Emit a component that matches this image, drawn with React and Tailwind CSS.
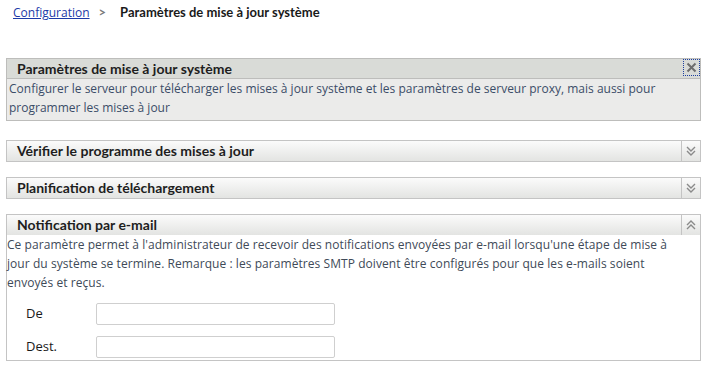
import React from "react";

const BODY = { fontFamily: '"Open Sans", "Liberation Sans", sans-serif' };
const HEAD = { fontFamily: 'Lato, "Liberation Sans", sans-serif' };

function DoubleChevron({ up }) {
  return (
    <svg width="10" height="10" viewBox="0 0 10 10" className="text-[#8a8a8a]">
      {up ? (
        <g fill="none" stroke="currentColor" strokeWidth="1.4">
          <path d="M1 5 L5 1 L9 5" />
          <path d="M1 9 L5 5 L9 9" />
        </g>
      ) : (
        <g fill="none" stroke="currentColor" strokeWidth="1.4">
          <path d="M1 1 L5 5 L9 1" />
          <path d="M1 5 L5 9 L9 5" />
        </g>
      )}
    </svg>
  );
}

function CollapsedHeader({ title, up }) {
  return (
    <div className="flex h-[20px] bg-gradient-to-b from-[#fbfbfb] to-[#e3e4e2]">
      <div className="flex-1 pl-[10px] text-[14px] font-bold text-[#1e1e1e] leading-[20px]" style={HEAD}>{title}</div>
      <div className="w-[19px] border-l border-[#c4c4c4] flex items-center justify-center">
        <DoubleChevron up={up} />
      </div>
    </div>
  );
}

export default function App() {
  return (
    <div className="w-[708px] h-[368px] bg-white overflow-hidden pl-[6px] pr-[7px] pt-[4px]" style={HEAD}>
      <div className="flex items-center h-[18px] pl-[7px]">
        <span className="text-[#1c3aa8] underline text-[12px]" style={BODY}>Configuration</span>
        <span className="ml-[9px] text-[#7a7a7a] font-bold text-[13px]">&gt;</span>
        <span className="ml-[14px] font-bold text-[13px] text-[#1a1a1a]">Paramètres de mise à jour système</span>
      </div>

      <div className="mt-[36px] border border-[#bdbdbb]">
        <div className="flex h-[20px] bg-[#d9dbd7] border-b border-[#bdbdbb]">
          <div className="flex-1 pl-[10px] text-[14px] font-bold text-[#1e1e1e] leading-[19px]">Paramètres de mise à jour système</div>
          <div className="w-[17px] h-[17px] border border-dotted border-[#1d3fa0] flex items-center justify-center">
            <svg width="11" height="11" viewBox="0 0 11 11">
              <path d="M1.5 1.5 L9.5 9.5 M9.5 1.5 L1.5 9.5" stroke="#6d6d6d" strokeWidth="2" />
            </svg>
          </div>
        </div>
        <div className="bg-[#ebebea] pl-[2px] pb-[3px] text-[12px] leading-[19px] text-[#3b4d68] whitespace-nowrap" style={BODY}>
          Configurer le serveur pour télécharger les mises à jour système et les paramètres de serveur proxy, mais aussi pour
          <br />
          programmer les mises à jour
        </div>
      </div>

      <div className="mt-[19px] border border-[#c4c4c4]">
        <CollapsedHeader title="Vérifier le programme des mises à jour" />
      </div>

      <div className="mt-[15px] border border-[#c4c4c4]">
        <CollapsedHeader title="Planification de téléchargement" />
      </div>

      <div className="mt-[15px] border border-[#c4c4c4]">
        <CollapsedHeader title="Notification par e-mail" up />
        <div className="bg-white pb-[2px]">
          <div className="text-[12px] leading-[19px] text-[#404a58] whitespace-nowrap tracking-[0.06px]" style={BODY}>
            Ce paramètre permet à l'administrateur de recevoir des notifications envoyées par e-mail lorsqu'une étape de mise à
            <br />
            jour du système se termine. Remarque : les paramètres SMTP doivent être configurés pour que les e-mails soient
            <br />
            envoyés et reçus.
          </div>
          <div className="mt-[11px] flex items-center h-[22px]">
            <div className="w-[89px] pl-[19px] text-[13px] text-[#1a1a1a]" style={BODY}>De</div>
            <div className="w-[239px] h-[22px] border border-[#cfcfcf] rounded-[2px] bg-white" />
          </div>
          <div className="mt-[11px] flex items-center h-[22px]">
            <div className="w-[89px] pl-[19px] text-[13px] text-[#1a1a1a]" style={BODY}>Dest.</div>
            <div className="w-[239px] h-[22px] border border-[#cfcfcf] rounded-[2px] bg-white" />
          </div>
        </div>
      </div>
    </div>
  );
}
